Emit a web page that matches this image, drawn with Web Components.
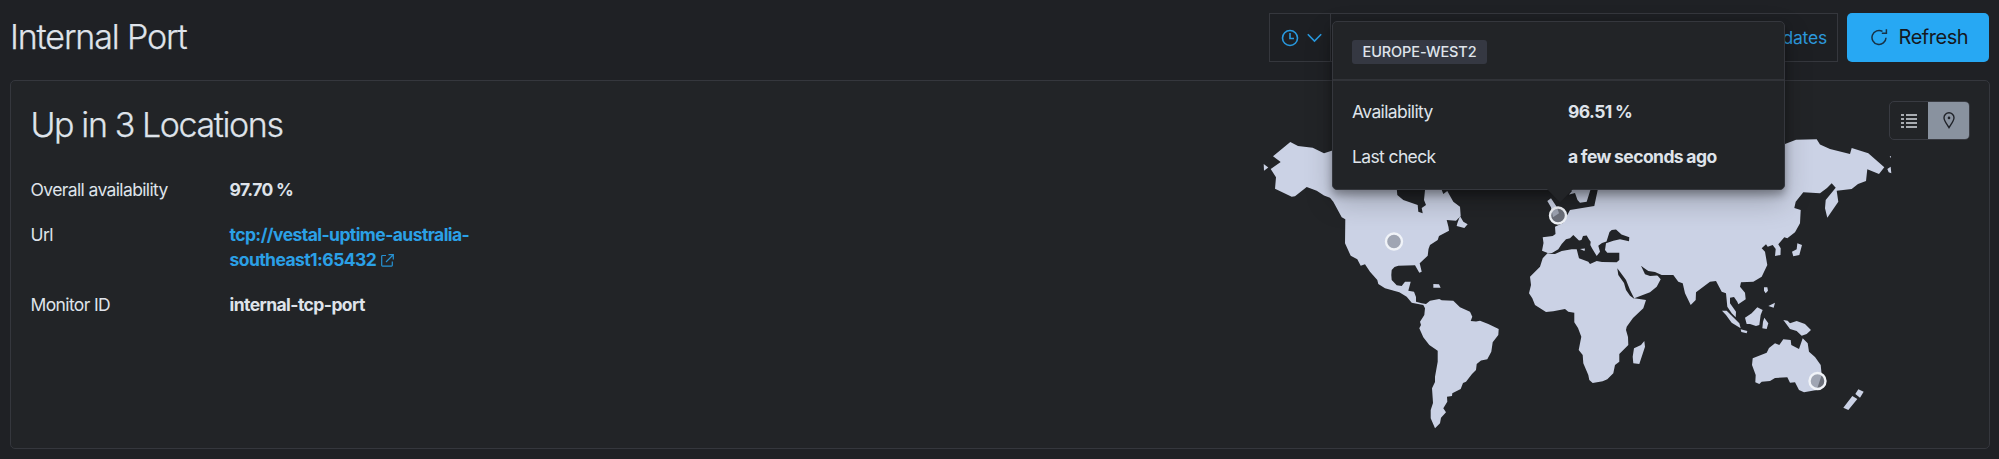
<!DOCTYPE html>
<html lang="en">
<head>
<meta charset="utf-8">
<title>Internal Port</title>
<style>
html,body{margin:0;height:459px;overflow:hidden;background:#1f2125}
body{font-family:Inter,"Liberation Sans",sans-serif;color:#dfe3ea}
</style>
</head>
<body>
<uptime-page></uptime-page>
<script>
const define = (name, html) => customElements.define(name, class extends HTMLElement {
  constructor() {
    super();
    const t = document.createElement('template');
    t.innerHTML = html;
    this.attachShadow({mode: 'open'}).append(t.content.cloneNode(true));
  }
});

define('detail-row', `
<style>
:host{display:grid;grid-template-columns:var(--label,199px) 1fr;font-size:17.5px;line-height:25.500px;letter-spacing:-.62px}
.v{font-weight:700;letter-spacing:-.57px;word-spacing:-.3px}
</style>
<span><slot name="label"></slot></span><span class="v"><slot></slot></span>`);

define('time-picker', `
<style>
:host{display:flex;box-sizing:border-box;width:569px;height:49px;border:1px solid #35373d;background:#1d1f23}
.quick{display:flex;align-items:center;gap:8px;width:61px;padding-left:11px;box-sizing:border-box;border-right:1px solid #35373d}
.show{margin-left:auto;align-self:center;padding-right:10px;color:#2c98dc;font-size:17.5px;letter-spacing:-.2px;line-height:24px}
svg{fill:none;stroke:#2899df;stroke-width:1.6}
</style>
<div class="quick">
<svg width="18" height="18" viewBox="0 0 18 18"><circle cx="9" cy="9" r="7.5"/><path d="M9 4v5.5h4"/></svg>
<svg width="15" height="10" viewBox="0 0 15 10"><path d="M.8 1.2l6.7 6.8 6.7-6.8"/></svg>
</div>
<span class="show">Show dates</span>`);

define('refresh-button', `
<style>
:host{display:flex;align-items:center;box-sizing:border-box;width:142px;height:49px;padding-left:23.500px;gap:11px;border-radius:5px;background:#27a8f3;color:#15181e;font-size:20px;line-height:26px;letter-spacing:-.45px;font-weight:400}
svg{fill:none;stroke:#173246;stroke-width:1.5}
span,svg{position:relative;top:-1px}
</style>
<svg width="17" height="18" viewBox="0 0 17 18"><path d="M11.5 3.4A7 7 0 1 0 15 9.7M15.4 1.2v4.1h-4.6"/></svg>
<span><slot></slot></span>`);

define('view-toggle', `
<style>
:host{display:flex;box-sizing:border-box;width:81px;height:39px;border:1px solid #393b42;border-radius:5px;overflow:hidden}
div{display:flex;align-items:center;justify-content:center;flex:1}
.on{background:#89929f;flex:0 0 41px}
</style>
<div><svg width="16" height="14" viewBox="0 0 16 14"><path d="M0 1h3M5 1h11M0 5h3M5 5h11M0 9h3M5 9h11M0 13h3M5 13h11" stroke="#d5d9e0" stroke-width="1.5"/></svg></div>
<div class="on"><svg width="12" height="17" viewBox="0 0 12 17"><path d="M6 15.6C3.5 11.5 1 8.8 1 5.8a5 5 0 0 1 10 0c0 3-2.500 5.700-5 9.800z" fill="none" stroke="#20232a" stroke-width="1.4"/><circle cx="6" cy="5.900" r="1.300" fill="#20232a"/></svg></div>`);

define('location-map', `
<style>
:host{display:block;width:640px;height:300px}
svg{display:block}
.land{fill:#cbd2e5}
.sea{fill:#222427}
.pin{fill:#8c929e;fill-opacity:.7;stroke:#f0f3f8;stroke-width:2.4}
</style>
<svg width="640" height="300" viewBox="1260 134 640 300">
<g class="land">
<path d="M1290.3 142L1273 156.300 1280.700 162 1270.700 169 1276 177.300 1275 188.700 1291.700 196.700 1295 196.300 1306.700 187 1316.700 190.700 1324 195.500 1330 197.700 1333.300 201.700 1341.700 217.300 1345.300 219.300 1345 243.300 1350.700 255.700 1357.300 259.300 1360.700 265.700 1365 264.300 1370 271.700 1377.300 280 1378.300 284 1385 288.300 1399.300 292.300 1406.700 296.700 1411.700 302.700 1423.300 305 1425 308.300 1424.300 315 1420 321.700 1421 325 1419.300 328.300 1423.300 337.300 1429.300 345 1437.700 350.700 1437.700 361.700 1435 376.700 1435 382 1432 388.300 1432.700 398.300 1433 403 1430.700 410 1430.700 418.300 1435 428.300 1440 423.300 1441 417.700 1446 412.300 1443.300 408.300 1447.300 401.700 1447 396.700 1452 396 1452.300 393.300 1460.700 389 1463 383 1466 381.700 1472 374 1476 370 1476.700 364 1481 360.500 1487.300 359.300 1491.300 351.700 1492.700 342.300 1498.300 335 1498.700 329 1488.300 324 1480 320.700 1476 321.500 1470.700 321 1472.300 316.700 1470 311.700 1460 307.300 1453.300 300.700 1441.700 300.300 1439.300 299 1430 300.700 1426 304 1421.700 303.300 1416 301.700 1416 297 1414 291.700 1408.300 290.700 1410.700 281.700 1405 281.700 1401.700 286 1396.700 285.300 1391.700 280 1391.300 275 1391.700 270 1394.500 267 1398.300 265.700 1415 265.300 1419.300 272.700 1421.700 271.700 1419.700 263.300 1427.700 255.700 1428.500 249 1430 245 1437.700 240 1439 236 1449 230.700 1448.500 227 1446.700 220 1456 220.700 1460.700 216 1460 206.700 1453.300 201.700 1447.300 191 1443.300 194 1441 188V160H1425V190L1424 200 1426 205 1421.700 208 1422.700 213.300 1418.300 211.700 1417.700 205 1403.300 200 1397.300 195 1396.700 188V160L1334 150 1324 153.300 1312.700 147.700 1298 146z"/>
<path d="M1594.300 206L1570 210 1563 223 1555 226.700 1555.500 234 1552.700 236 1542.700 237.300 1543.500 243 1542 250.700 1547.700 253 1542.700 258.300 1540 266.700 1530 276.700 1531 285 1529 293.300 1532.300 298.300 1535 305 1546 312 1553.300 311.300 1565 309 1568.300 311.700 1574.300 312.700 1574.300 322.300 1578 328 1581.300 336.700 1578.700 350 1582.700 355 1583.300 363.300 1588.300 375 1589.300 380 1592.700 383 1602.700 381.300 1607.300 379.300 1613.300 373.300 1615 365 1619.300 361.700 1619.300 354 1628.300 345 1628 337 1626 330 1626.700 326.700 1633 318 1643.300 308.300 1646 300 1634.300 298.300 1650 292.300 1656.700 286.700 1660.700 279.300 1657 275 1661.700 275 1673.300 275 1678.300 281.700 1682.700 283.300 1685 293.300 1690.700 305 1695.700 300 1696 292.300 1710 281.700 1716 281 1721.700 291.700 1726 293.300 1727.300 306.700 1731.700 313.300 1735.700 317.300 1736 311.700 1730 303.300 1730 297.700 1734 297 1737.300 301.700 1738.300 304.300 1745.700 299.300 1745 292.700 1740 286.700 1741 282.300 1753.300 281.700 1761.700 276.700 1767.300 265 1765 251.700 1761.700 248.300 1766 244.300 1767.700 246.700 1772.700 245 1775.700 249 1775 256 1780.500 255 1780.700 248.300 1778.300 244.300 1784.300 237.300 1787.300 238.300 1795 232.300 1800 223.300 1800.700 210 1794.300 208 1795.700 201.700 1803.300 192.300 1820 193.300 1827 188 1831.700 183.300 1835.700 187.700 1825.700 200 1825 208.300 1827.300 217.700 1838.300 201.700 1836.700 190.700 1851.700 189 1858 184 1866 181 1867.300 169.300 1879 174 1884.300 167.300 1868.300 153.300 1851.700 148 1850 154 1830 149 1820 144.500 1816.700 139.300 1796 139.700 1785 144 1770 155 1598 175 1597.700 190z"/>
<path d="M1568 188L1572 191 1569 194.500 1575 193 1577.500 200 1580 202.700 1586.700 201.700 1591 188zM1547.300 201l3.700-2.700 6 9 2 6-6 4-2-10zM1644.300 341L1645 346.700 1639.300 364 1633.300 363.300 1632.700 356.700 1634 348.300 1641 345z"/>
<path d="M1752.700 358.300L1766.700 352.700 1769 348 1775 343.300 1779.300 345 1783.300 339.300 1790.700 340 1791.300 345 1799 349 1802.700 338.300 1807.700 343.300 1809 351.700 1815 357 1820.700 365 1821.700 375 1816.700 390 1804 392.300 1799 390 1795 382.300 1790 382.700 1787.300 377.300 1775 378 1770 381 1761.700 381.700 1759.300 384 1755.300 382.300 1755.700 375 1752 365z"/>
<g transform="translate(1650 250) scale(.33333)"><path d="M400 210L413 212 420 220 440 213 465 222 483 240 470 252 455 257 440 243 420 237zM285 203L305 190 322 172 338 180 332 195 328 225 318 228 300 222 290 222zM216 182L230 182 268 220 272 235 245 218 228 195zM272 238L292 243 290 250 274 246zM343 203L355 220 350 237 337 235 339 215zM342 112L352 112 354 122 347 130 342 122zM355 168L375 158 371 173zM625 418L641 425 630 443 616 432zM607 438L622 447 595 480 580 473z"/></g>
<g transform="translate(1700 120) scale(.33333)"><path d="M292 370L306 375 298 405 280 409 276 395 290 388zM562 147L572 140 574 160 566 157zM569 108L573 109 573 115z"/></g>
<g transform="translate(1370 180) scale(.33333)"><path d="M190 312L207 313 212 323 190 323zM262 130L270 108 280 125 293 133 283 144 260 138z"/></g>
<path d="M1263.700 164l4.600 3.500-4.300 3.300z"/>
</g>
<g class="sea">
<path d="M1546.700 253.700L1552 253 1558.300 249.300 1561.700 244 1566 239.300 1570 238.300 1573.300 235 1579 240.500 1581.500 240 1583 236 1586.700 235.500 1589 239.500 1590.700 241.700 1590.300 245 1592 248.300 1596.700 256 1600 251.700 1598.300 245.700 1602 243 1606.500 241.500 1609.500 232 1611.700 230 1616 229.500 1621.500 234.500 1629.300 237.300 1629 241.300 1620 239.300 1613.300 240.700 1606 243.300 1605 250 1607.300 252.700 1619.300 252.700 1619.300 260 1616.700 262.300 1602 262 1596.700 261 1590 264 1588.300 261.700 1579 258.300 1576.700 249.300 1571.700 249.300 1561.700 251 1555 254z"/>
<path d="M1617.300 268.300L1620.700 272.700 1626 280 1630 290 1634.500 299 1630 295.700 1626 290 1624 283 1618.300 275zM1641 265.700L1644 268 1648.300 271 1655 272 1661.700 275 1657 275.500 1650 276 1645 274.300z"/>
</g>
<path class="land" d="M1580 249l5-.5-.5 2.500z"/>
<circle class="pin" cx="1394" cy="241.500" r="8"/><circle class="pin" cx="1558" cy="215.500" r="8"/><circle class="pin" cx="1817.500" cy="381" r="8"/>
</svg>`);

define('location-popover', `
<style>
:host{display:block;position:absolute;left:1331.500px;top:20.500px;width:453px;height:169.500px;box-sizing:border-box;border:1px solid #35373d;border-radius:5px;background:#222427;box-shadow:0 5px 9px rgba(0,0,0,.32),0 12px 28px rgba(0,0,0,.22)}
header{padding:18px 19.500px 0;height:39.500px;border-bottom:2px solid #313338}
b{display:inline-block;height:24px;line-height:24px;padding:0 10.500px;border-radius:3px;background:#353842;font-size:14.500px;font-weight:500;letter-spacing:-.1px}
.rows{display:grid;gap:19px;padding:18px 19.500px}
.tip{position:absolute;left:214px;top:167.500px}
</style>
<header><b>EUROPE-WEST2</b></header>
<div class="rows" style="--label:216px">
<detail-row><span slot="label">Availability</span>96.51 %</detail-row>
<detail-row><span slot="label">Last check</span>a few seconds ago</detail-row>
</div>
<svg class="tip" width="26" height="15" viewBox="0 0 26 15"><path d="M0 0h26L13 13.500z" fill="#222427"/></svg>`);

define('uptime-page', `
<style>
:host{display:block;width:1999px;height:459px;overflow:hidden;position:relative}
.top{display:flex;align-items:center;height:49px;padding:13px 10px 18px 10px}
h1,h2{font-weight:300;font-size:34px;line-height:40px;margin:0;letter-spacing:-1.400px}
h1{flex:1;letter-spacing:-1.150px;margin-top:-2px;-webkit-text-stroke:.25px}
h2{-webkit-text-stroke:.25px}
time-picker{margin-right:9px}
.panel{display:flex;box-sizing:border-box;height:369px;margin:0 9px 0 10px;border:1px solid #35373d;border-radius:5px;background:#222427}
.info{width:1249px;padding:24px 0 0 19.500px;box-sizing:border-box}
.list{display:grid;gap:19.200px;margin-top:32px;width:480px}
a{color:#2ba0e6}
location-map{margin-top:53px;flex:none}
view-toggle{margin:20px 19px 0 -11px;flex:none}
.ext{vertical-align:-1px;margin-left:5px}
</style>
<div class="top"><h1>Internal Port</h1><time-picker></time-picker><refresh-button>Refresh</refresh-button></div>
<section class="panel">
<div class="info"><h2>Up in 3 Locations</h2>
<div class="list">
<detail-row><span slot="label">Overall availability</span>97.70 %</detail-row>
<detail-row><span slot="label">Url</span><a>tcp://vestal-uptime-australia-<br>southeast1:65432<svg class="ext" width="13" height="13" viewBox="0 0 13 13" fill="none" stroke="#2692d3" stroke-width="1.200"><path d="M5 1.500H1.500a.8.8 0 0 0-.8.8v9a.8.8 0 0 0 .8.8h9a.8.8 0 0 0 .8-.8V7.500M7.500.7h4.800v4.800M12 1L5 8"/></svg></a></detail-row>
<detail-row><span slot="label">Monitor ID</span>internal-tcp-port</detail-row>
</div></div>
<location-map></location-map>
<view-toggle></view-toggle>
</section>
<location-popover></location-popover>`);
</script>
</body>
</html>
